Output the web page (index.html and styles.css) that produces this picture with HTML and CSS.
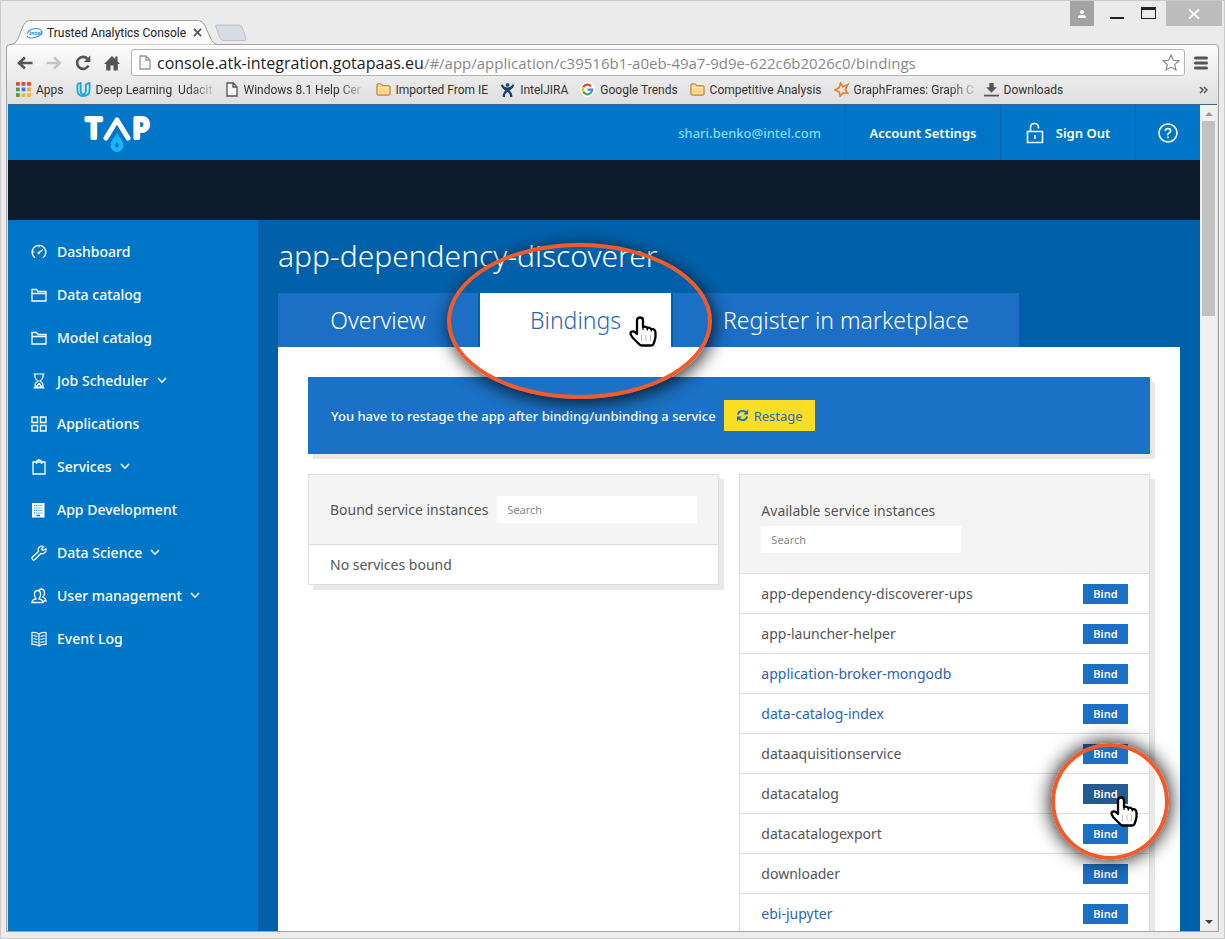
FILE: index.html
```html
<!DOCTYPE html>
<html lang="en">
<head>
<meta charset="utf-8">
<title>Trusted Analytics Console</title>
<link rel="stylesheet" href="styles.css">
</head>
<body>
<svg class="defs" aria-hidden="true">
  <symbol id="folder" viewBox="0 0 16 14"><path d="M1 3.5V2.2Q1 1 2.2 1H5.2Q6 1 6.5 2L7 3H13.8Q15 3 15 4.200V11.800Q15 13 13.800 13H2.200Q1 13 1 11.800Z" fill="#fcd588" stroke="#a1702c"/><path d="M2 5H14" stroke="#fff0c8"/></symbol>
  <symbol id="page" viewBox="0 0 12 15"><path d="M1 1H7L11 5V14H1ZM7 1V5H11" fill="#f7f7f7" stroke="currentColor" stroke-width="1.3"/></symbol>
  <symbol id="catalog" viewBox="0 0 16 14"><path d="M1 13V1.500H5.500L7 3.500H15V13ZM1 5.500H15" fill="none" stroke="currentColor" stroke-width="1.300"/></symbol>
  <symbol id="chevron" viewBox="0 0 10 7"><path d="M1 1L5 5.200L9 1" fill="none" stroke="currentColor" stroke-width="1.600"/></symbol>
  <symbol id="hand" viewBox="0 0 28 31"><path d="M8 18V4.500Q8 1.500 11 1.500T14 4.500V11Q16.500 9.800 18.300 12Q20.500 10.800 22.300 13.300Q26.500 12.500 26.500 17V21Q26 24 24.500 28Q24 29.500 22 29.500H13Q11 29.500 9.500 27.500L3.500 21.500Q.500 17.500 2 16Q4 14.500 6.500 16.500L8 18Z" fill="#fff" stroke="#000" stroke-width="2.300" stroke-linejoin="round"/><path d="M14 11V14M18.300 12V14.500M22.300 13.300V15.500" stroke="#000" stroke-width="1.300"/><path d="M12.500 19V25M17 19V25M21.500 19V25" stroke="#bbb" stroke-width="1"/></symbol>
</svg>
<div class="window">
  <header class="tabstrip">
    <div class="browser-tab">
      <svg class="tab-shape" viewBox="0 0 214 26" preserveAspectRatio="none"><path d="M0 25.500Q6 25 8 20L14 5Q16 .500 20 .500H194Q198 .500 200 5L207 20Q209 25 214 25.500" fill="#fbfbfb" stroke="#999"/></svg>
      <svg class="intel" viewBox="0 0 18 12"><path d="M2 7Q1 3 8 1.500T17 5Q17 9 9 10.700T1.500 9" fill="none" stroke="#3b8ede" stroke-width="1.100"/><text x="3.500" y="8.300">intel</text></svg>
      <span class="tab-title">Trusted Analytics Console</span>
      <button class="tab-close" aria-label="Close tab"><svg viewBox="0 0 10 10"><path d="M1 1L9 9M9 1L1 9" stroke="#555" stroke-width="1.800"/></svg></button>
    </div>
    <button class="new-tab" aria-label="New tab"><svg viewBox="0 0 34 18"><path d="M3 1H24Q27 1 28 3L32 14Q32.500 16.500 30 16.500H10Q7 16.500 6 14L2 3Q1 1 3 1Z" fill="#d5dce6" stroke="#bcc1c8"/></svg></button>
    <div class="controls">
      <button class="ctl user" aria-label="Profile"><svg viewBox="0 0 10 10"><circle cx="5" cy="3" r="2" fill="#fff"/><path d="M1 9V8Q1 6 5 6T9 8V9Z" fill="#fff"/></svg></button>
      <button class="ctl min" aria-label="Minimize"></button>
      <button class="ctl max" aria-label="Maximize"></button>
      <button class="ctl close" aria-label="Close"><svg viewBox="0 0 12 10"><path d="M1 .500L11 9.500M11 .500L1 9.500" stroke="#fff" stroke-width="2"/></svg></button>
    </div>
  </header>
  <div class="frame">
    <div class="toolbar">
      <button class="tool" aria-label="Back"><svg viewBox="0 0 16 14"><path d="M15.500 7H3M8 1.500L2 7L8 12.500" fill="none" stroke="#555" stroke-width="2.600"/></svg></button>
      <button class="tool" aria-label="Forward"><svg viewBox="0 0 16 14"><path d="M.500 7H13M8 1.500L14 7L8 12.500" fill="none" stroke="#c4c4c4" stroke-width="2.400"/></svg></button>
      <button class="tool" aria-label="Reload"><svg viewBox="0 0 16 16"><path d="M13.500 10.500A6 6 0 1 1 12.500 3.800" fill="none" stroke="#555" stroke-width="2.600"/><path d="M15.300 .500V7H8.800Z" fill="#555"/></svg></button>
      <button class="tool" aria-label="Home"><svg viewBox="0 0 16 16"><path d="M8 1L0 9H2.200V15.500H6.500V10.500H9.500V15.500H13.800V9H16L13.500 6.300V1.500H11.200V4Z" fill="#555"/></svg></button>
      <div class="address">
        <svg class="i-page soft"><use href="#page"/></svg>
        <span class="url">console.atk-integration.gotapaas.eu<span class="path">/#/app/application/c39516b1-a0eb-49a7-9d9e-622c6b2026c0/bindings</span></span>
        <button class="star" aria-label="Bookmark this page"><svg viewBox="0 0 18 17"><path d="M9 1L11.300 6.300L17 6.800L12.700 10.600L14 16L9 13.100L4 16L5.300 10.600L1 6.800L6.700 6.300Z" fill="none" stroke="#888" stroke-width="1.200"/></svg></button>
      </div>
      <button class="menu" aria-label="Menu"><svg viewBox="0 0 14 14"><path d="M1.500 2H12.500M1.500 7H12.500M1.500 12H12.500" stroke="#555" stroke-width="3" stroke-linecap="round"/></svg></button>
    </div>
    <nav class="bookmarks" aria-label="Bookmarks">
      <a href="#" class="bm"><svg viewBox="0 0 14 14"><path d="M0 0h3.500v3.500H0ZM5.200 0h3.500v3.500H5.200ZM10.400 0h3.500v3.500H10.400Z" fill="#e2453c"/><path d="M0 5.200h3.500v3.500H0Z" fill="#3f9e4d"/><path d="M5.200 5.200h3.500v3.500H5.200Z" fill="#3a7cec"/><path d="M10.400 5.200h3.500v3.500H10.400Z" fill="#f4a83a"/><path d="M0 10.400h3.500v3.500H0Z" fill="#3f9e4d"/><path d="M5.200 10.400h3.500v3.500H5.200ZM10.400 10.400h3.500v3.500H10.400Z" fill="#f2b62d"/></svg>Apps</a>
      <a href="#" class="bm long"><svg class="i16" viewBox="0 0 16 16"><path d="M1.500 2.500L5 1V9Q5 13 8 13M1.500 2.500V8Q1.500 15 7.500 15Q14.500 15 14.500 8V1L10.500 2.500V9Q10.500 12.500 7.500 13.500" fill="none" stroke="#1ba9dd" stroke-width="2"/></svg><span class="fade">Deep Learning&nbsp; Udacit</span></a>
      <a href="#" class="bm long"><svg class="i-page"><use href="#page"/></svg><span class="fade">Windows 8.1 Help Cer</span></a>
      <a href="#" class="bm"><svg class="i16"><use href="#folder"/></svg>Imported From IE</a>
      <a href="#" class="bm"><svg viewBox="0 0 14 16"><circle cx="7" cy="3" r="2" fill="#1d4a80"/><path d="M1 3Q2 7 7 7T13 3M3 16Q3 11 7 9T12 5M11 16Q11 11 7 9T2 5" fill="none" stroke="#17406f" stroke-width="2.400"/></svg>IntelJIRA</a>
      <a href="#" class="bm"><svg viewBox="0 0 16 16"><circle cx="8" cy="8" r="8" fill="#fff"/><g fill="none" stroke-width="2.300"><path d="M3.500 5.500A5 5 0 0 1 11.700 4.500" stroke="#e74235"/><path d="M3.500 10.500A5 5 0 0 1 3.500 5.500" stroke="#f9bb2d"/><path d="M11.500 11.600A5 5 0 0 1 3.500 10.500" stroke="#34a353"/><path d="M8 8.200H13A5 5 0 0 1 11.300 11.800" stroke="#4284f3"/></g></svg>Google Trends</a>
      <a href="#" class="bm"><svg class="i16"><use href="#folder"/></svg>Competitive Analysis</a>
      <a href="#" class="bm long"><svg viewBox="0 0 16 16"><path d="M7 1L9.500 5L14.500 3L12 8L14.500 12L9.500 11.500L6.500 15L5.500 10.500L1 8.500L5.500 6Z" fill="none" stroke="#ee7d31" stroke-width="1.800"/></svg><span class="fade">GraphFrames: Graph C</span></a>
      <a href="#" class="bm"><svg viewBox="0 0 14 14"><path d="M5 1H9V5H12L7 10L2 5H5Z" fill="#555"/><path d="M0 12.700H14" stroke="#555" stroke-width="1.600"/></svg>Downloads</a>
      <button class="more" aria-label="More bookmarks"><svg viewBox="0 0 9 8"><path d="M1 1L4 4L1 7M5 1L8 4L5 7" fill="none" stroke="#555" stroke-width="1.500"/></svg></button>
    </nav>
    <div class="viewport">
      <div class="page">
        <header class="topbar">
          <a href="#" class="logo" aria-label="TAP"><svg viewBox="0 0 70 38"><text x="2" y="22">T</text><path d="M22 22L33 4L44 22" class="peak"/><text x="49" y="22">P</text><path d="M33 17C36 22 39.500 25 39.500 29.500A6.500 6.500 0 0 1 26.500 29.500C26.500 25 30 22 33 17Z" fill="#16b4f4"/><path d="M33 26L35 29.500L33 32L31 29.500Z" fill="#0776c5"/></svg></a>
          <span class="mail">shari.benko@intel.com</span>
          <a href="#" class="top-link account">Account Settings</a>
          <a href="#" class="top-link signout"><svg viewBox="0 0 18 22"><path d="M1.500 9.500H16.500V20.500H1.500ZM4.500 9.500V5.500Q4.500 1.500 8.500 1.500T12.500 5.500V6.500M9 13V17" fill="none" stroke="#fff" stroke-width="1.600"/></svg>Sign Out</a>
          <a href="#" class="top-link help" aria-label="Help"><svg viewBox="0 0 20 20"><circle cx="10" cy="10" r="9" fill="none" stroke="#fff" stroke-width="1.600"/><path d="M7.300 8Q7.300 5.500 10 5.500T12.700 7.800Q12.700 9 11 10T10 12.300M10 13.500V15.200" fill="none" stroke="#fff" stroke-width="1.600"/></svg></a>
        </header>
        <div class="band"></div>
        <div class="body">
          <nav class="side" aria-label="Main">
            <a href="#"><svg viewBox="0 0 16 16"><path d="M4 13.700A6.800 6.800 0 1 1 12 13.700M7.500 9L12 5.500" fill="none" stroke="currentColor" stroke-width="1.400"/><path d="M8 2V3.500M2 8H3.500" stroke="currentColor"/><circle cx="7.800" cy="9" r="1.300" fill="currentColor"/></svg>Dashboard</a>
            <a href="#"><svg><use href="#catalog"/></svg>Data catalog</a>
            <a href="#"><svg><use href="#catalog"/></svg>Model catalog</a>
            <a href="#"><svg viewBox="0 0 16 16"><path d="M2.500 1H13.500M2.500 15H13.500M4 1V4Q4 6 7 8Q4 10 4 12V15M12 1V4Q12 6 9 8Q12 10 12 12V15M5 14L8 10.500L11 14Z" fill="none" stroke="currentColor" stroke-width="1.200"/></svg>Job Scheduler<svg class="chev"><use href="#chevron"/></svg></a>
            <a href="#"><svg viewBox="0 0 16 16"><path d="M1 1H6.500V6.500H1ZM9.500 1H15V6.500H9.500ZM1 9.500H6.500V15H1ZM9.500 9.500H15V15H9.500Z" fill="none" stroke="currentColor" stroke-width="1.400"/></svg>Applications</a>
            <a href="#"><svg viewBox="0 0 16 16"><path d="M2 3H14V15H2ZM5.500 5V3Q5.500 1 8 1T10.500 3V5" fill="none" stroke="currentColor" stroke-width="1.300"/></svg>Services<svg class="chev"><use href="#chevron"/></svg></a>
            <a href="#"><svg viewBox="0 0 16 16"><path d="M1 1H13.500V15.500H1Z" fill="currentColor"/><path d="M3 3.500H12M3 6H12M3 8.500H12M3 11H12" stroke="#0877c5" stroke-dasharray="1 1.200"/><path d="M5.500 13.500H9" stroke="#0877c5" stroke-width="1.500"/></svg>App Development</a>
            <a href="#"><svg viewBox="0 0 16 16"><path d="M1.500 12L7.500 6.500Q6.500 4 8.500 2Q10.500 .500 12.500 1.500L10.500 4L12 5.500L14.800 3.500Q15.500 6 14 7.500Q12 9.300 9.800 8.500L4 14.500Q2.500 15.500 1.500 14.500Q.500 13 1.500 12Z" fill="none" stroke="currentColor" stroke-width="1.300"/></svg>Data Science<svg class="chev"><use href="#chevron"/></svg></a>
            <a href="#"><svg viewBox="0 0 16 16"><path d="M1 14.500Q1 11.500 5 10.800Q3 8 3.500 5Q4 2.500 6.500 2.500T9.500 5Q10 8 8 10.800Q12 11.500 12 14.500ZM8 2Q9 1 10.500 1Q13.500 1.200 13.500 5Q13.300 7.500 12 9Q15 10.500 15 13H12.500" fill="none" stroke="currentColor" stroke-width="1.300"/></svg>User management<svg class="chev"><use href="#chevron"/></svg></a>
            <a href="#"><svg viewBox="0 0 16 16"><path d="M8 3Q5 1 1 1.500V13.500Q5 13 8 15Q11 13 15 13.500V1.500Q11 1 8 3V15M2.500 4.500L6.500 5.500M2.500 7.500L6.500 8.500M2.500 10.500L6.500 11.500M13.500 4.500L9.500 5.500M13.500 7.500L9.500 8.500M13.500 10.500L9.500 11.500" fill="none" stroke="currentColor" stroke-width="1.200"/></svg>Event Log</a>
          </nav>
          <main class="main">
            <h1>app-dependency-discoverer</h1>
            <div class="tabs">
              <a href="#" class="tab">Overview</a>
              <a href="#" class="tab active">Bindings<span class="ring ring-tab"></span><svg class="hand hand-tab"><use href="#hand"/></svg></a>
              <a href="#" class="tab">Register in marketplace</a>
            </div>
            <div class="card">
              <div class="notice">
                <span>You have to restage the app after binding/unbinding a service</span>
                <button class="restage"><svg viewBox="0 0 14 14"><path d="M2 6Q3 2 7 2Q9.500 2 11 4M12 8Q11 12 7 12Q4.500 12 3 10" fill="none" stroke="#1b6fc2" stroke-width="2"/><path d="M13 .500V5.800H7.800ZM1 13.500V8.200H6.200Z" fill="#1b6fc2"/></svg>Restage</button>
              </div>
              <div class="panels">
                <section class="panel">
                  <div class="panel-head"><label for="bound">Bound service instances</label><input id="bound" type="text" placeholder="Search"></div>
                  <div class="row"><span>No services bound</span></div>
                </section>
                <section class="panel">
                  <div class="panel-head stacked"><label for="avail">Available service instances</label><input id="avail" type="text" placeholder="Search"></div>
                  <div class="row"><span>app-dependency-discoverer-ups</span><button class="bind">Bind</button></div>
                  <div class="row"><span>app-launcher-helper</span><button class="bind">Bind</button></div>
                  <div class="row"><a href="#">application-broker-mongodb</a><button class="bind">Bind</button></div>
                  <div class="row"><a href="#">data-catalog-index</a><button class="bind">Bind</button></div>
                  <div class="row"><span>dataaquisitionservice</span><button class="bind">Bind</button></div>
                  <div class="row target"><span>datacatalog</span><button class="bind pressed">Bind</button><span class="ring ring-bind"></span><svg class="hand hand-bind"><use href="#hand"/></svg></div>
                  <div class="row"><span>datacatalogexport</span><button class="bind">Bind</button></div>
                  <div class="row"><span>downloader</span><button class="bind">Bind</button></div>
                  <div class="row"><a href="#">ebi-jupyter</a><button class="bind">Bind</button></div>
                  <div class="row"></div>
                </section>
              </div>
            </div>
          </main>
        </div>
      </div>
      <div class="scroll" aria-hidden="true"><i class="up"></i><i class="thumb"></i><i class="down"></i></div>
    </div>
  </div>
</div>
</body>
</html>
```
FILE: styles.css
```css
* { box-sizing: border-box; }
body { margin: 0; font-family: "Noto Sans", "Open Sans", sans-serif; font-size: 13px; color: #555; }
a { color: inherit; text-decoration: none; }
button { border: 0; padding: 0; background: none; font: inherit; color: inherit; display: flex; align-items: center; justify-content: center; }
svg { display: block; flex: none; }
.defs { position: absolute; width: 0; height: 0; }

/* browser window */
.window { height: 100vh; display: flex; flex-direction: column; padding: 0 5px 6px; background: #ebebeb; border: 1px solid #c9c9c9; overflow: hidden; }
.tabstrip { display: flex; align-items: flex-end; height: 44px; flex: none; padding-left: 4px; margin-bottom: -1px; z-index: 1; }
.browser-tab { position: relative; display: flex; align-items: center; width: 208px; height: 25px; padding: 0 16px 0 16px; }
.tab-shape { position: absolute; inset: 0; width: 100%; height: 100%; }
.browser-tab > :not(.tab-shape) { position: relative; }
.intel { width: 17px; height: 12px; margin-right: 4px; }
.intel text { font: bold 6px "Open Sans", sans-serif; fill: #2a80d6; }
.tab-title { flex: 1; font: 12px Roboto, sans-serif; color: #222; white-space: nowrap; }
.tab-close svg { width: 9px; height: 9px; }
.new-tab { align-self: flex-end; padding-bottom: 3px; margin-left: -4px; }
.new-tab svg { width: 34px; height: 18px; }
.controls { display: flex; align-self: flex-start; align-items: flex-start; margin-left: auto; margin-right: -3px; height: 26px; }
.ctl { height: 25px; }
.user { width: 24px; background: #a3a3a3; }
.user svg { width: 10px; height: 10px; }
.min { width: 14px; height: 2px; background: #222; margin: 16px 17px 0 16px; }
.max { width: 15px; height: 12px; border: 1px solid #222; border-top-width: 3px; margin: 6px 10px 0 0; }
.close { width: 56px; background: #bcbcbc; }
.close svg { width: 12px; height: 10px; }

.frame { flex: 1; min-height: 0; display: flex; flex-direction: column; border: 1px solid #a3a3a3; border-radius: 4px 4px 0 0; background: linear-gradient(#fbfbfb, #dedede 60px); padding: 0 1px; }
.toolbar { display: flex; align-items: center; height: 35px; padding: 0 9px; flex: none; }
.tool { width: 29px; justify-content: flex-start; }
.tool svg { width: 16px; height: 16px; }
.address { flex: 1; display: flex; align-items: center; height: 27px; margin-right: 9px; padding: 0 4px 0 7px; background: #fff; border: 1px solid #b4b4b4; border-radius: 3px; min-width: 0; }
.tool + .address { margin-left: -2px; }
.i-page { width: 12px; height: 15px; }
.soft { color: #999; margin-right: 6px; }
.url { flex: 1; font: 16px "Open Sans", sans-serif; color: #222; white-space: nowrap; }
.path { font-size: 15px; color: #888; }
.star svg { width: 18px; height: 17px; }
.menu svg { width: 14px; height: 14px; }
.bookmarks { display: flex; align-items: center; gap: 12px; height: 24px; flex: none; padding: 0 9px 5px 8px; font: 12px Roboto, sans-serif; color: #333; }
.bm { display: flex; align-items: center; gap: 5px; white-space: nowrap; }
.bm svg { width: 15px; height: 15px; }
.bm .i-page { width: 12px; color: #555; margin-right: 1px; }
.long { width: 138px; }
.fade { mask-image: linear-gradient(to right, #000 80%, #0003); }
.more { margin-left: auto; }
.more svg { width: 9px; height: 8px; }

/* web page */
.viewport { flex: 1; min-height: 0; display: flex; border-top: 1px solid #3d668c; overflow: hidden; }
.page { flex: 1; min-width: 0; overflow: hidden; display: flex; flex-direction: column; background: #0061aa; }
.topbar { display: flex; align-items: stretch; height: 55px; flex: none; background: #0076c8; color: #fff; font-size: 13px; font-weight: 600; }
.logo { margin: 11px auto 0 76px; }
.logo svg { width: 70px; height: 38px; overflow: visible; }
.logo text { font: 26px Lato, sans-serif; fill: #fff; stroke: #fff; stroke-width: 4; stroke-linejoin: round; }
.peak { fill: none; stroke: #fff; stroke-width: 5; stroke-linecap: round; stroke-linejoin: round; }
.mail { align-self: center; padding-right: 24px; color: #7fdcff; font-weight: 500; }
.top-link { display: flex; align-items: center; justify-content: center; border-left: 1px solid #005fae; }
.account { width: 155px; }
.signout { width: 135px; gap: 12px; }
.signout svg { width: 18px; height: 22px; }
.help { width: 65px; }
.help svg { width: 20px; height: 20px; }
.band { height: 60px; flex: none; background: #0c1c2c; }
.body { flex: 1; min-height: 0; display: flex; }
.side { width: 250px; flex: none; padding: 10px 23px; background: #0076c8; color: #fff; font-weight: 500; }
.side a { display: flex; align-items: center; height: 43px; font-size: 14px; }
.side svg { width: 16px; height: 16px; margin-right: 10px; }
.side .chev { width: 10px; height: 7px; margin: 0 0 0 8px; }
.main { flex: 1; min-width: 0; padding: 16px 20px 0; }
h1 { margin: 0 0 17px; font-size: 30px; line-height: 40px; font-weight: 300; color: #fff; }
.tabs { display: flex; gap: 2px; }
.tab { position: relative; display: flex; align-items: center; justify-content: center; height: 54px; padding: 0 50px; background: #1b6fc5; color: #fff; font-size: 23px; font-weight: 300; white-space: nowrap; }
.tab:first-child { min-width: 200px; }
.tab.active { background: #fff; color: #2a66b4; }
.card { background: #fff; padding: 30px; }
.notice { display: flex; align-items: center; gap: 8px; height: 77px; padding: 0 23px; margin-bottom: 20px; background: #1b71c5; color: #fff; font-weight: 500; box-shadow: 5px 5px 0 #e8e8e8; white-space: nowrap; }
.restage { height: 31px; padding: 0 12px; gap: 5px; background: #fcdd26; color: #1b6fc2; font-weight: 400; }
.restage svg { width: 13px; height: 13px; }
.panels { display: grid; grid-template-columns: 1fr 1fr; gap: 20px; align-items: start; font-size: 14px; }
.panel { border: 1px solid #ddd; box-shadow: 5px 5px 0 #e8e8e8; background: #fff; }
.panel-head { display: flex; align-items: center; gap: 9px; height: 69px; padding: 0 21px; background: #f4f4f4; }
.panel-head.stacked { flex-direction: column; align-items: flex-start; justify-content: center; gap: 6px; height: 98px; padding-top: 6px; }
.panel-head label { line-height: 18px; white-space: nowrap; }
.panel-head input { width: 200px; height: 27px; padding: 0 10px; border: 0; background: #fff; font: 11px "Noto Sans", sans-serif; color: #555; }
.panel-head input::placeholder { color: #888; }
.row { display: flex; align-items: center; justify-content: space-between; height: 40px; padding: 0 21px; border-top: 1px solid #ddd; line-height: 18px; }
.row a { color: #2a66b4; }
.bind { width: 45px; height: 20px; background: #1b6fc5; color: #fff; font-size: 11px; font-weight: 600; }
.pressed { background: #245a8f; }

/* callouts over the page */
.ring { position: absolute; border: 4px solid #f15a29; border-radius: 50%; pointer-events: none; z-index: 2; }
.ring-tab { left: -33px; right: -41px; top: -50px; height: 156px; box-shadow: 2px 4px 18px #000c; }
.ring-bind { right: -20px; top: -31px; width: 118px; height: 117px; box-shadow: 0 0 20px #000; }
.target { position: relative; }
.hand { position: absolute; width: 28px; height: 31px; z-index: 3; }
.hand-tab { right: 14px; top: 23px; }
.hand-bind { right: 11px; top: 22px; }

.scroll { width: 17px; flex: none; display: flex; flex-direction: column; align-items: center; background: #f0f0f0; padding: 7px 0; }
.up, .down { border: 4px solid transparent; }
.up { border-top: 0; border-bottom: 4px solid #999; }
.down { border-bottom: 0; border-top: 4px solid #444; margin-top: auto; }
.thumb { width: 13px; height: 195px; margin-top: 5px; background: #c1c1c1; }
```
